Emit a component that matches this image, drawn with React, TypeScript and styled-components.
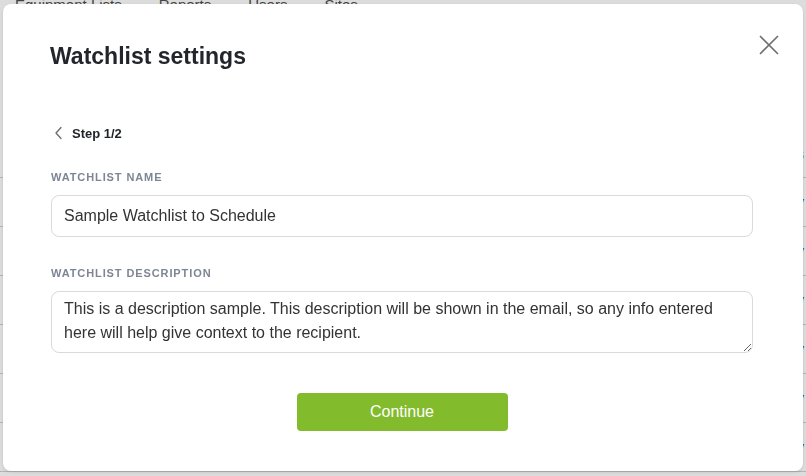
import React from "react";
import { styled, createGlobalStyle } from "styled-components";

const GlobalStyle = createGlobalStyle`
  html, body {
    margin: 0;
    padding: 0;
    width: 806px;
    height: 476px;
    overflow: hidden;
    background: #ffffff;
    font-family: "Liberation Sans", Arial, sans-serif;
  }
`;

const rows = [
  { name: "Chiller 1", user: "y" },
  { name: "Boiler 2", user: "y" },
  { name: "AHU 3", user: "y" },
  { name: "Pump 4", user: "y" },
  { name: "Fan 5", user: "y" },
  { name: "Tower 6", user: "y" },
];

const App: React.FC = () => {
  return (
    <>
      <GlobalStyle />
      <Page>
        <Tabs>
          <Tab>Equipment Lists</Tab>
          <Tab>Reports</Tab>
          <Tab>Users</Tab>
          <Tab>Sites</Tab>
        </Tabs>
        <Table>
          <HeadRow>
            <Cell>Name</Cell>
            <Cell>Schedules</Cell>
          </HeadRow>
          {rows.map((r) => (
            <Row key={r.name}>
              <Cell>{r.name}</Cell>
              <Cell>{r.user}</Cell>
            </Row>
          ))}
        </Table>
      </Page>

      <Overlay>
        <Modal role="dialog" aria-labelledby="wl-title">
          <CloseButton aria-label="Close">
            <svg width="20" height="20" viewBox="0 0 20 20">
              <path
                d="M1.5 1.5 L18.5 18.5 M18.5 1.5 L1.5 18.5"
                stroke="#6f6f6f"
                strokeWidth="1.7"
                strokeLinecap="round"
                fill="none"
              />
            </svg>
          </CloseButton>

          <Title id="wl-title">Watchlist settings</Title>

          <StepRow>
            <svg width="9" height="14" viewBox="0 0 9 14">
              <path
                d="M7 1.5 L2 7 L7 12.5"
                stroke="#6b6b6b"
                strokeWidth="1.3"
                fill="none"
                strokeLinecap="round"
                strokeLinejoin="round"
              />
            </svg>
            <StepText>Step 1/2</StepText>
          </StepRow>

          <Field>
            <Label htmlFor="wl-name">Watchlist name</Label>
            <TextInput id="wl-name" defaultValue="Sample Watchlist to Schedule" />
          </Field>

          <Field $gap={29}>
            <Label htmlFor="wl-desc">Watchlist description</Label>
            <TextArea
              id="wl-desc"
              defaultValue="This is a description sample. This description will be shown in the email, so any info entered here will help give context to the recipient."
            />
          </Field>

          <Actions>
            <PrimaryButton>Continue</PrimaryButton>
          </Actions>
        </Modal>
      </Overlay>
    </>
  );
};

export default App;

const Page = styled.div`
  width: 806px;
  height: 476px;
  background: #ffffff;
`;

const Tabs = styled.div`
  display: flex;
  gap: 37px;
  padding-left: 15px;
  margin-top: -11px;
  height: 30px;
  align-items: center;
`;

const Tab = styled.span`
  font-size: 15px;
  color: #4a4a4a;
`;

const Table = styled.div`
  margin-top: 112px;
  display: flex;
  flex-direction: column;
`;

const HeadRow = styled.div`
  display: flex;
  justify-content: space-between;
  height: 46px;
  align-items: center;
  padding: 0 2px 0 6px;
  border-bottom: 1px solid #cfcfcf;
  font-weight: 700;
  color: #666;
  font-size: 14px;
`;

const Row = styled.div`
  display: flex;
  justify-content: space-between;
  height: 48px;
  align-items: center;
  padding: 0 2px 0 6px;
  border-bottom: 1px solid #cfcfcf;
  color: #1a4d8f;
  font-size: 14px;
`;

const Cell = styled.span``;

const Overlay = styled.div`
  position: fixed;
  inset: 0;
  background: rgba(40, 40, 40, 0.16);
`;

const Modal = styled.div`
  position: absolute;
  top: 4px;
  left: 3px;
  width: 800px;
  height: 467px;
  box-sizing: border-box;
  padding: 38px 50px 0 48px;
  background: #ffffff;
  border-radius: 8px;
  box-shadow: 0 1px 3px rgba(0, 0, 0, 0.12);
  display: flex;
  flex-direction: column;
`;

const CloseButton = styled.button`
  position: absolute;
  top: 27px;
  right: 20px;
  width: 28px;
  height: 28px;
  padding: 0;
  border: none;
  background: transparent;
  display: flex;
  align-items: center;
  justify-content: center;
  cursor: pointer;
`;

const Title = styled.h2`
  margin: 0 0 0 -1px;
  font-size: 23px;
  line-height: 28px;
  font-weight: 700;
  color: #22252b;
`;

const StepRow = styled.div`
  margin-top: 55px;
  display: flex;
  align-items: center;
  gap: 9px;
  height: 16px;
  padding-left: 3px;
`;

const StepText = styled.span`
  font-size: 13px;
  font-weight: 700;
  color: #1f2227;
`;

const Field = styled.div<{ $gap?: number }>`
  margin-top: ${(p) => p.$gap ?? 29}px;
  display: flex;
  flex-direction: column;
  gap: 11px;
`;

const Label = styled.label`
  font-size: 11px;
  line-height: 14px;
  font-weight: 700;
  letter-spacing: 0.9px;
  text-transform: uppercase;
  color: #7d8694;
`;

const TextInput = styled.input`
  box-sizing: border-box;
  width: 100%;
  height: 42px;
  padding: 0 12px;
  border: 1px solid #d9dae0;
  border-radius: 8px;
  font-family: "Liberation Sans", Arial, sans-serif;
  font-size: 16px;
  color: #333333;
  outline: none;
`;

const TextArea = styled.textarea`
  box-sizing: border-box;
  width: 100%;
  height: 62px;
  padding: 5px 12px;
  border: 1px solid #d9dae0;
  border-radius: 8px;
  font-family: "Liberation Sans", Arial, sans-serif;
  font-size: 16px;
  line-height: 24px;
  color: #333333;
  resize: vertical;
  outline: none;
`;

const Actions = styled.div`
  margin-top: 40px;
  display: flex;
  justify-content: center;
`;

const PrimaryButton = styled.button`
  width: 211px;
  height: 38px;
  border: none;
  border-radius: 4px;
  background: #82bc2c;
  color: #ffffff;
  font-family: "Liberation Sans", Arial, sans-serif;
  font-size: 16px;
  cursor: pointer;
`;
